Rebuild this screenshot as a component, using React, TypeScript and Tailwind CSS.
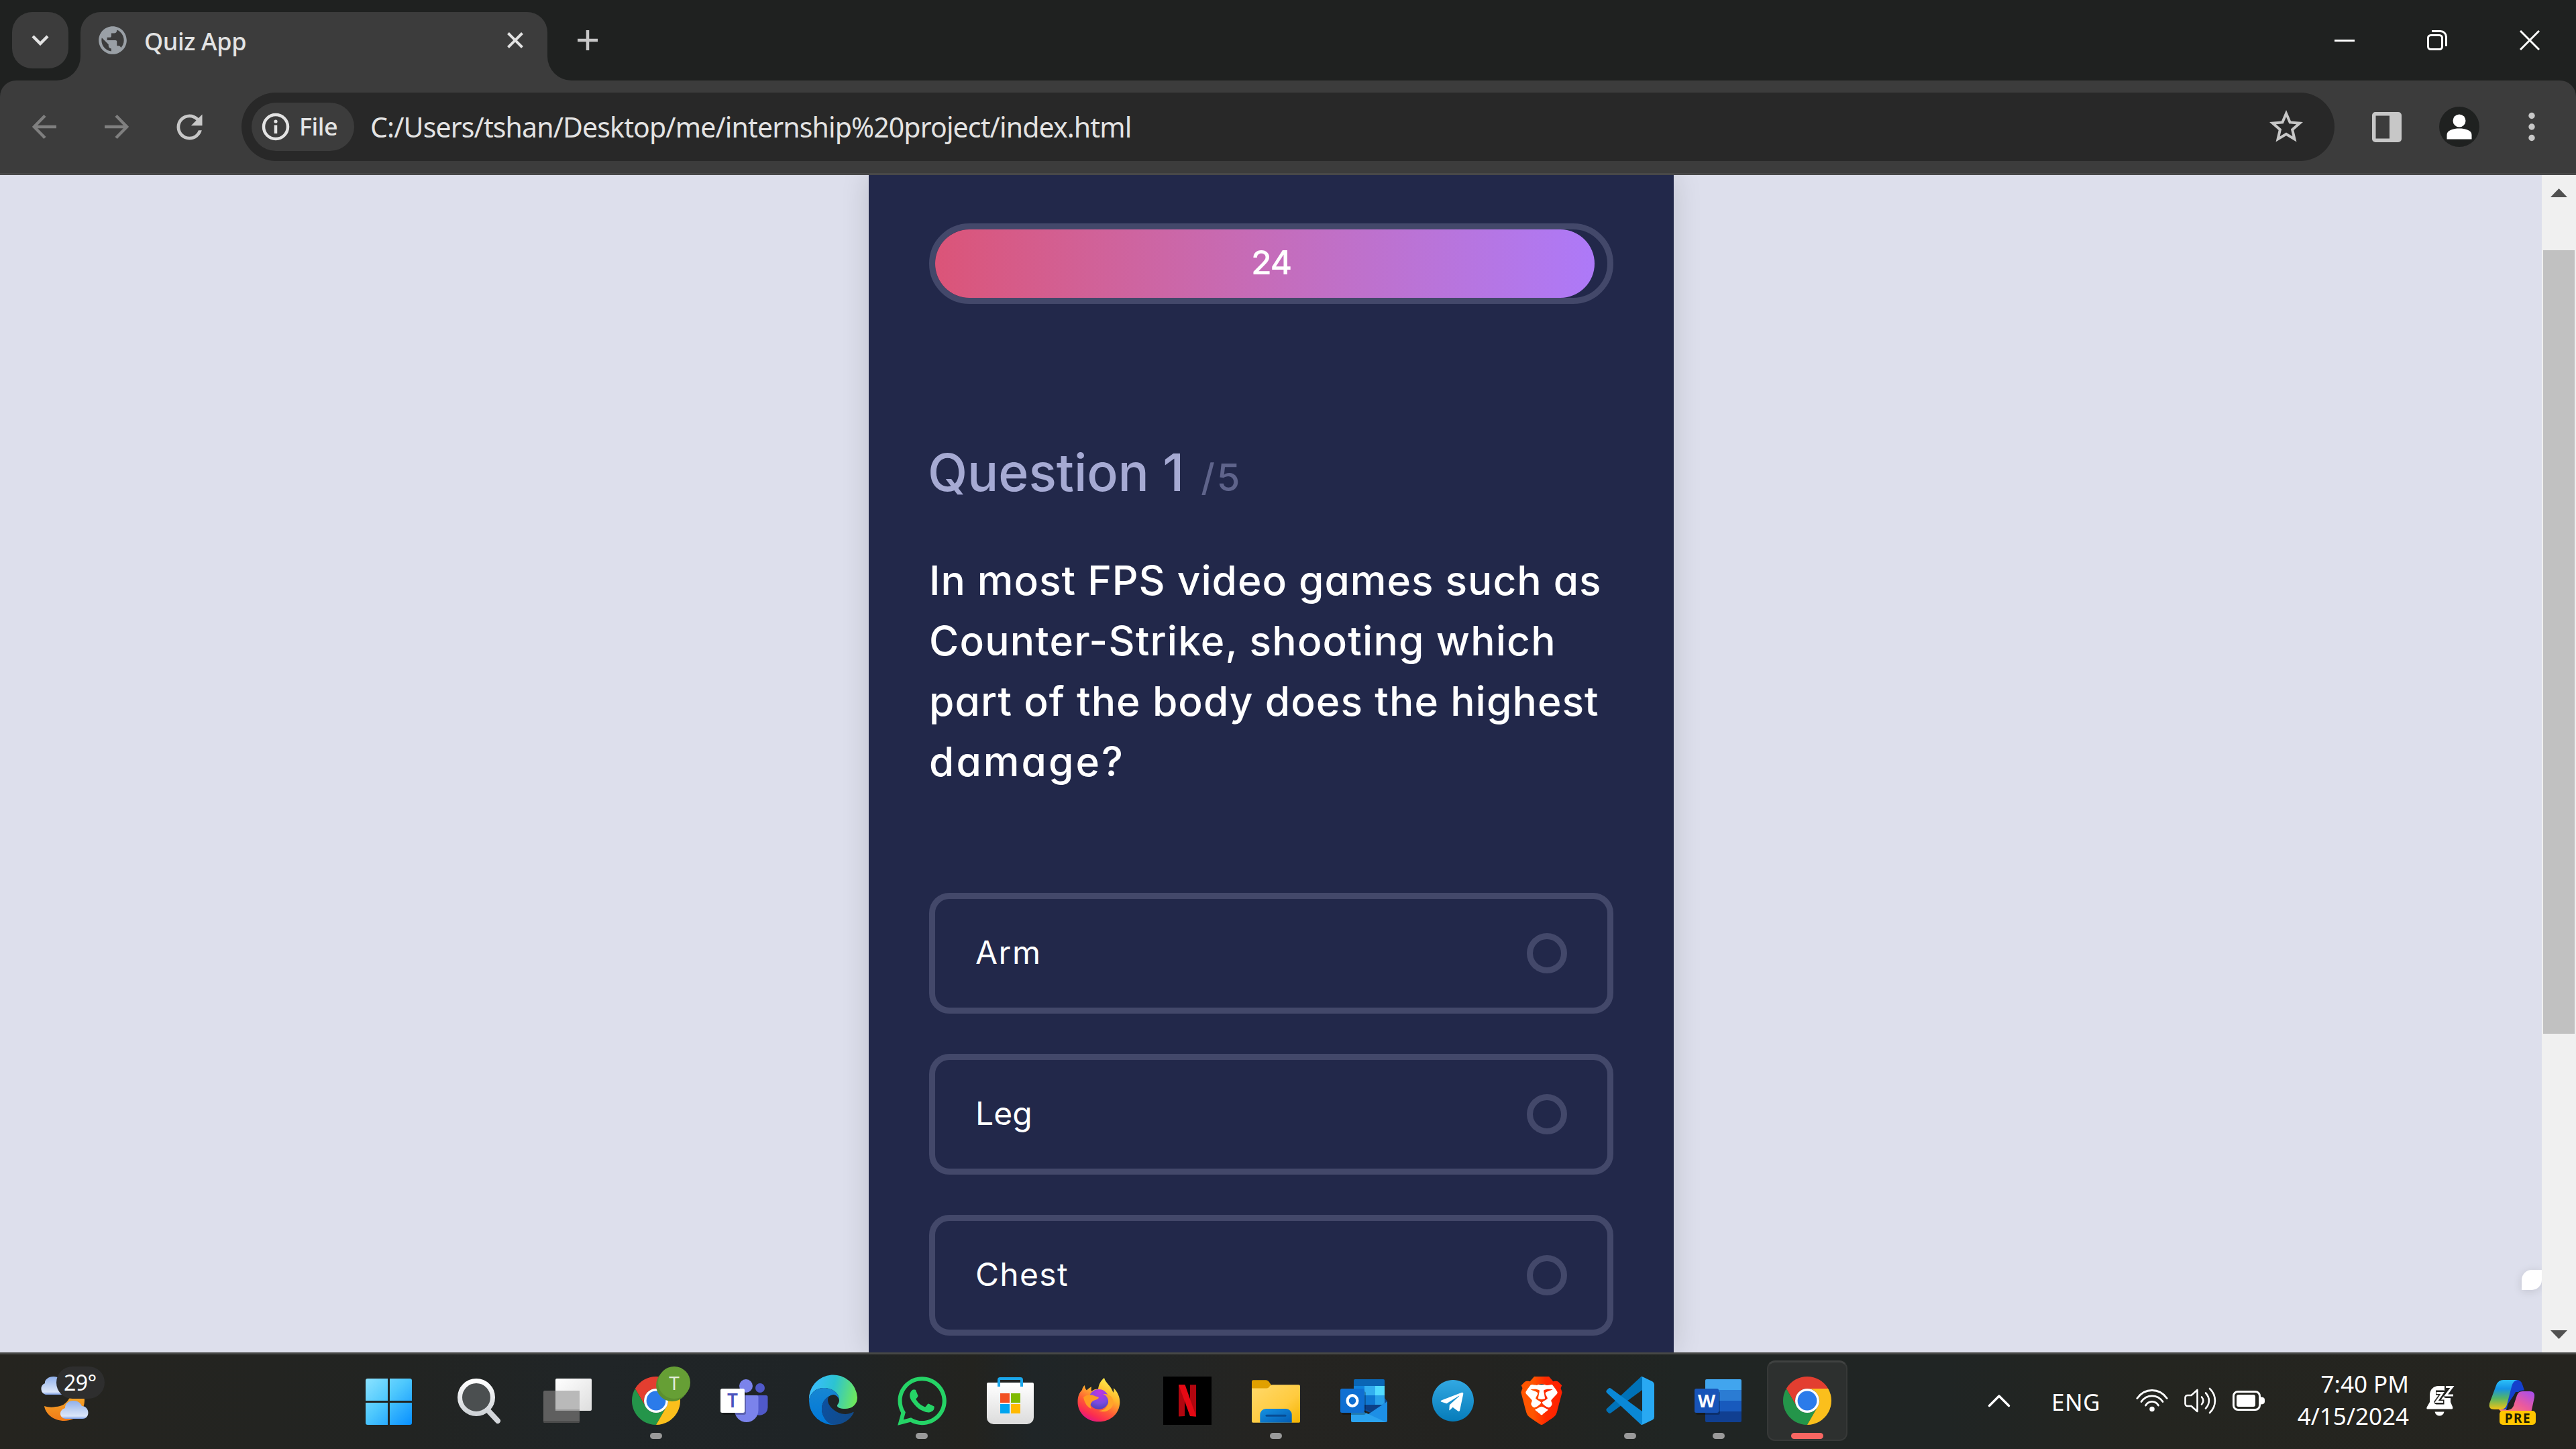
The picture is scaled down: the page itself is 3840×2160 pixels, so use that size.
import type { ReactNode } from "react";
import { FaTelegram, FaWhatsapp } from "react-icons/fa";
import { MdPublic, MdRefresh, MdStarBorder } from "react-icons/md";
import { SiBrave } from "react-icons/si";

/* ---------- Browser chrome ---------- */

function WindowControls() {
  return (
    <div className="ml-auto flex h-[120px]">
      <div className="flex w-[138px] items-center justify-center">
        <svg className="h-[30px] w-[30px]" viewBox="0 0 30 30">
          <path d="M0 15.500H30" stroke="#fff" strokeWidth="3" />
        </svg>
      </div>
      <div className="flex w-[138px] items-center justify-center">
        <svg className="h-[30px] w-[30px]" viewBox="0 0 30 30" fill="none" stroke="#fff" strokeWidth="3">
          <rect x="1.500" y="7.500" width="21" height="21" rx="4" />
          <path d="M7 1.500H20a8.500 8.500 0 0 1 8.500 8.500V24" />
        </svg>
      </div>
      <div className="flex w-[138px] items-center justify-center">
        <svg className="h-[30px] w-[30px]" viewBox="0 0 30 30">
          <path d="M1 1L29 29M29 1L1 29" stroke="#fff" strokeWidth="3" />
        </svg>
      </div>
    </div>
  );
}

function TabStrip() {
  return (
    <div className="flex h-[120px] w-full bg-[#1f2120]">
      <div className="mt-[18px] ml-[18px] flex h-[84px] w-[84px] shrink-0 items-center justify-center rounded-[30px] bg-[#3c3c3c]">
        <svg className="h-[18px] w-[28px]" viewBox="0 0 28 18">
          <path d="M3 3L14 14L25 3" fill="none" stroke="#e3e3e3" strokeWidth="4.500" />
        </svg>
      </div>
      <div className="relative mt-[18px] ml-[18px] flex h-[102px] w-[696px] shrink-0 items-start rounded-t-[30px] bg-[#3c3c3c]">
        <svg className="absolute bottom-0 -left-[36px] h-[36px] w-[36px]" viewBox="0 0 36 36">
          <path d="M36 0V36H0A36 36 0 0 0 36 0Z" fill="#3c3c3c" />
        </svg>
        <svg className="absolute -right-[36px] bottom-0 h-[36px] w-[36px]" viewBox="0 0 36 36">
          <path d="M0 0V36H36A36 36 0 0 1 0 0Z" fill="#3c3c3c" />
        </svg>
        <MdPublic className="mt-[17px] ml-[23px] h-[50px] w-[50px] text-[#9aa0a6]" />
        <span className="ml-[22px] h-[84px] text-[36px] leading-[88px] font-medium tracking-[-0.4px] whitespace-nowrap text-[#e3e3e3]">
          Quiz App
        </span>
        <svg className="mt-[30px] mr-[36px] ml-auto h-[24px] w-[24px]" viewBox="0 0 24 24">
          <path d="M1.500 1.500L22.500 22.500M22.500 1.500L1.500 22.500" stroke="#e3e3e3" strokeWidth="4" />
        </svg>
      </div>
      <div className="flex h-[120px] w-[120px] items-center justify-center">
        <svg className="h-[30px] w-[30px]" viewBox="0 0 30 30">
          <path d="M0 15H30M15 0V30" stroke="#c7c7c7" strokeWidth="4.500" />
        </svg>
      </div>
      <WindowControls />
    </div>
  );
}

function ToolCell({ children }: { children: ReactNode }) {
  return <div className="flex w-[108px] shrink-0 items-center justify-center">{children}</div>;
}

function Toolbar() {
  return (
    <div className="h-[141px] bg-[#1f2120]">
      <div className="flex h-[141px] items-stretch rounded-t-[24px] border-b-[3px] border-[#484848] bg-[#3c3c3c] pl-[12px]">
        <ToolCell>
          <svg className="h-[38px] w-[36px]" viewBox="0 0 36 38">
            <path d="M36 19H4M19 2.500L2.800 19L19 35.500" fill="none" stroke="#7f7f7f" strokeWidth="4.500" />
          </svg>
        </ToolCell>
        <ToolCell>
          <svg className="h-[38px] w-[36px]" viewBox="0 0 36 38">
            <path d="M0 19H32M17 2.500L33.200 19L17 35.500" fill="none" stroke="#7f7f7f" strokeWidth="4.500" />
          </svg>
        </ToolCell>
        <ToolCell>
          <MdRefresh className="h-[57px] w-[57px] text-[#c7c7c7]" />
        </ToolCell>
        <div className="mt-[18px] ml-[24px] flex h-[102px] w-[3120px] shrink-0 items-center rounded-full bg-[#282828] pl-[15px]">
          <div className="flex h-[72px] w-[153px] shrink-0 items-center rounded-full bg-[#3c3c3c] pl-[15px]">
            <svg className="h-[42px] w-[42px]" viewBox="0 0 42 42">
              <circle cx="21" cy="21" r="18" fill="none" stroke="#e3e3e3" strokeWidth="4.500" />
              <path d="M21 18.500V31" stroke="#e3e3e3" strokeWidth="4.500" />
              <circle cx="21" cy="13" r="2.600" fill="#e3e3e3" />
            </svg>
            <span className="ml-[14px] text-[36px] leading-[68px] font-medium tracking-[-0.5px] text-[#e3e3e3]">File</span>
          </div>
          <span className="ml-[24px] text-[41px] leading-[98px] tracking-[-0.87px] whitespace-nowrap text-[#e3e3e3]">
            C:/Users/tshan/Desktop/me/internship%20project/index.html
          </span>
          <MdStarBorder className="mr-[42px] ml-auto h-[60px] w-[60px] text-[#c7c7c7]" />
        </div>
        <div className="ml-[24px] flex">
          <ToolCell>
            <svg className="h-[45px] w-[44px]" viewBox="0 0 44 45">
              <path fillRule="evenodd" fill="#c7c7c7" d="M5 0H39a5 5 0 0 1 5 5V40a5 5 0 0 1-5 5H5a5 5 0 0 1-5-5V5a5 5 0 0 1 5-5ZM5.500 5.500V39.500H26V5.500Z" />
            </svg>
          </ToolCell>
          <ToolCell>
            <svg className="h-[60px] w-[60px]" viewBox="0 0 60 60">
              <circle cx="30" cy="30" r="30" fill="#1f2120" />
              <circle cx="30" cy="21" r="9.500" fill="#fff" />
              <path d="M11.500 48.500V42C11.500 35 21 32.500 30 32.500S48.500 35 48.500 42V48.500Z" fill="#fff" />
            </svg>
          </ToolCell>
          <ToolCell>
            <svg className="h-[44px] w-[10px]" viewBox="0 0 10 44" fill="#c7c7c7">
              <circle cx="5" cy="5.500" r="4.700" />
              <circle cx="5" cy="22" r="4.700" />
              <circle cx="5" cy="38.500" r="4.700" />
            </svg>
          </ToolCell>
        </div>
      </div>
    </div>
  );
}

/* ---------- Quiz page ---------- */

const questionLines: [string, string][] = [
  ["In most FPS video games such as", "tracking-[0.95px]"],
  ["Counter-Strike, shooting which", "tracking-[1.15px]"],
  ["part of the body does the highest", "tracking-[1.05px]"],
  ["damage?", "tracking-[3px]"],
];

const options: [string, string][] = [
  ["Arm", "tracking-[1.5px]"],
  ["Leg", "tracking-[0px]"],
  ["Chest", "tracking-[1.3px]"],
];

function QuizCard() {
  return (
    <div className="ml-[1295px] h-[1755px] w-[1200px] shrink-0 bg-[#22284a] px-[90px] pt-[72px] font-[Inter] shadow-[0_0_40px_0_rgba(0,0,0,0.14)] [font-feature-settings:'cv11']">
      <div className="relative h-[120px] w-[1020px] rounded-full border-[9px] border-[#43486a]">
        <div className="h-[102px] w-[983px] rounded-full bg-linear-to-r from-[#db5478] to-[#ad79f8]" />
        <div className="absolute inset-0 flex items-center justify-center pb-[4px]">
          <span className="text-[50px] leading-none font-[550] tracking-[-1.500px] text-white">24</span>
        </div>
      </div>
      <h1 className="mt-[206px] h-[90px] text-[77px] leading-[90px] font-[520] whitespace-nowrap text-[#a6aad3]">
        <span className="-ml-[2px] tracking-[-0.1px]">Question 1</span>
        <span className="ml-[25px] text-[56px] font-medium tracking-[3px] text-[#5f648b]">/5</span>
      </h1>
      <div className="mt-[71px] text-[60.5px] leading-[90px] font-[530] whitespace-nowrap text-white">
        {questionLines.map(([line, tracking]) => (
          <div key={line} className={tracking}>
            {line}
          </div>
        ))}
      </div>
      <div className="mt-[151px] flex flex-col gap-[60px]">
        {options.map(([label, tracking]) => (
          <div
            key={label}
            className="flex h-[180px] w-[1020px] items-center justify-between rounded-[30px] border-[9px] border-[#43486a] px-[60px] text-[48px] text-white"
          >
            <span className={`pb-[2px] ${tracking}`}>{label}</span>
            <span className="h-[60px] w-[60px] rounded-full border-[9px] border-[#43486a]" />
          </div>
        ))}
      </div>
    </div>
  );
}

function Page() {
  return (
    <div className="flex h-[1755px] w-full overflow-hidden bg-[#dddfec]">
      <QuizCard />
      <div className="relative ml-auto h-full w-[51px] shrink-0 bg-[#f0f0f0]">
        <div className="absolute top-[1632px] right-[51px] h-[30px] w-[30px] rounded-tl-[15px] rounded-br-[15px] bg-white shadow-[0_2px_14px_0_rgba(0,0,0,0.12)]" />
        <div className="relative flex h-full flex-col items-center bg-[#f0f0f0]">
          <svg className="mt-[20px] h-[13px] w-[25px]" viewBox="0 0 25 13">
            <path d="M0 13L12.500 0L25 13Z" fill="#505050" />
          </svg>
          <div className="mt-[79px] h-[1168px] w-[47px] bg-[#c1c1c1]" />
          <svg className="mt-auto mb-[20px] h-[13px] w-[25px]" viewBox="0 0 25 13">
            <path d="M0 0L12.500 13L25 0Z" fill="#505050" />
          </svg>
        </div>
      </div>
    </div>
  );
}

/* ---------- Taskbar icons ---------- */

function Glyph({ children }: { children: ReactNode }) {
  return (
    <svg className="h-[72px] w-[72px] overflow-visible" viewBox="0 0 72 72">
      {children}
    </svg>
  );
}

function StartIcon() {
  return (
    <Glyph>
      <linearGradient id="start" gradientUnits="userSpaceOnUse" x1="0" y1="3" x2="68" y2="72">
        <stop offset="0" stopColor="#8ae2ff" />
        <stop offset=".45" stopColor="#4ec8fd" />
        <stop offset="1" stopColor="#0890ff" />
      </linearGradient>
      <g fill="url(#start)">
        <path d="M2 3H32V36H-1V6A3 3 0 0 1 2 3Z" />
        <path d="M35 3H65A3 3 0 0 1 68 6V36H35Z" />
        <path d="M-1 39H32V72H2A3 3 0 0 1-1 69Z" />
        <path d="M35 39H68V69A3 3 0 0 1 65 72H35Z" />
      </g>
    </Glyph>
  );
}

function SearchIcon() {
  return (
    <Glyph>
      <linearGradient id="lens" x1="0" y1="0" x2="0" y2="1">
        <stop offset="0" stopColor="#ffffff" />
        <stop offset="1" stopColor="#cfd3d7" />
      </linearGradient>
      <path d="M50 51L64 66" stroke="#d3d6da" strokeWidth="8" strokeLinecap="round" />
      <circle cx="32" cy="31" r="24.500" fill="#4b4f50" stroke="url(#lens)" strokeWidth="7" />
    </Glyph>
  );
}

function TaskViewIcon() {
  return (
    <Glyph>
      <linearGradient id="pane" x1="0" y1="0" x2="1" y2="1">
        <stop offset="0" stopColor="#ffffff" />
        <stop offset="1" stopColor="#dedede" />
      </linearGradient>
      <rect x="18" y="3" width="54" height="48" rx="2" fill="url(#pane)" />
      <rect x="0" y="21" width="54" height="48" rx="2" fill="#5f5f5f" />
      <rect x="18" y="21" width="36" height="28" fill="#b9b9b9" />
      <rect x="18" y="49" width="36" height="2" fill="#9c9c9c" />
      <path d="M0 66H54V67A2 2 0 0 1 52 69H2A2 2 0 0 1 0 67Z" fill="#4c4c4c" />
    </Glyph>
  );
}

function ChromeIcon() {
  return (
    <Glyph>
      <path d="M4.800 18A36 36 0 0 1 67.200 18H36A18 18 0 0 0 20.400 45Z" fill="#e33e30" />
      <path d="M4.800 18A36 36 0 0 0 36 72L51.600 45A18 18 0 0 1 20.400 45Z" fill="#24954a" />
      <path d="M67.200 18A36 36 0 0 1 36 72L51.600 45A18 18 0 0 0 36 18Z" fill="#fbbf1c" />
      <circle cx="36" cy="36" r="18" fill="#fff" />
      <circle cx="36" cy="36" r="14.400" fill="#2b7bea" />
    </Glyph>
  );
}

function ChromeProfileIcon() {
  return (
    <div className="relative h-[72px] w-[72px]">
      <ChromeIcon />
      <div className="absolute -top-[11px] left-[36px] h-[48px] w-[48px] rounded-full bg-[#5b8f30]" />
      <div className="absolute -top-[15px] left-[39px] flex h-[48px] w-[48px] items-center justify-center rounded-full bg-[#669f35] text-[28px] leading-none text-[#e4edda]">
        T
      </div>
    </div>
  );
}

function TeamsIcon() {
  return (
    <Glyph>
      <circle cx="59" cy="17" r="7" fill="#5059c9" />
      <circle cx="38" cy="14" r="10" fill="#7b83eb" />
      <path d="M50 28H68A2.500 2.500 0 0 1 70.500 30.500V46A12 12 0 0 1 50 54Z" fill="#5059c9" />
      <path d="M21 28H54A2.500 2.500 0 0 1 56.500 30.500V50A17.700 18 0 0 1 21 50Z" fill="#7b83eb" />
      <rect x="3" y="22" width="35" height="35" rx="3" fill="#000" opacity=".25" />
      <rect x="0" y="18" width="36" height="36" rx="2.500" fill="#fff" />
      <text x="18" y="46" textAnchor="middle" fontFamily="Noto Sans" fontSize="28" fontWeight="600" fill="#4b53bc">T</text>
    </Glyph>
  );
}

function EdgeIcon() {
  return (
    <Glyph>
      <linearGradient id="edgeTop" gradientUnits="userSpaceOnUse" x1="4" y1="20" x2="70" y2="36">
        <stop offset="0" stopColor="#39bdfb" />
        <stop offset=".45" stopColor="#2cc3d2" />
        <stop offset="1" stopColor="#6fe95a" />
      </linearGradient>
      <linearGradient id="edgeLeft" gradientUnits="userSpaceOnUse" x1="20" y1="17" x2="20" y2="70">
        <stop offset="0" stopColor="#1786d2" />
        <stop offset="1" stopColor="#0078d9" />
      </linearGradient>
      <linearGradient id="edgeDark" gradientUnits="userSpaceOnUse" x1="20" y1="40" x2="66" y2="60">
        <stop offset="0" stopColor="#0c50a0" />
        <stop offset="1" stopColor="#124a88" />
      </linearGradient>
      <path d="M0 36A36 36 0 0 1 72 31C72 42 64 48 54 48C46 48 42 46 42 43.500C42 41.500 45 40 45 35C45 24 34 17 22 17C10 17 1 25 0 36Z" fill="url(#edgeTop)" />
      <path d="M0 36C1 25 10 17 22 17C34 17 45 24 45 35C43 29 39 27 36 27C26 29 19 38 19 48C19 60 28 70 40 71.800A36 36 0 0 1 0 36Z" fill="url(#edgeLeft)" />
      <path d="M32 28.500C24 32 19 39 19 48C19 60 27 71 37 72C51 72 62 64 66.500 54C67 52.500 66 52.500 64.500 53.500C58 57 49 56.500 42 53C34 48.500 28 42 28 35C28 31 30 29 32 28.500Z" fill="url(#edgeDark)" />
    </Glyph>
  );
}

function StoreIcon() {
  return (
    <Glyph>
      <linearGradient id="bag" x1="0" y1="0" x2="0" y2="1">
        <stop offset="0" stopColor="#ffffff" />
        <stop offset="1" stopColor="#dcdcdc" />
      </linearGradient>
      <path d="M3 9H69A2 2 0 0 1 71 11V61A10 10 0 0 1 61 71H11A10 10 0 0 1 1 61V11A2 2 0 0 1 3 9Z" fill="url(#bag)" />
      <path d="M19 15V5A2 2 0 0 1 21 3H51A2 2 0 0 1 53 5V15" fill="none" stroke="#1aa7ec" strokeWidth="4" />
      <rect x="21" y="25" width="14" height="14" fill="#f25022" />
      <rect x="37" y="25" width="14" height="14" fill="#7fba00" />
      <rect x="21" y="41" width="14" height="14" fill="#00a4ef" />
      <rect x="37" y="41" width="14" height="14" fill="#ffb900" />
    </Glyph>
  );
}

function FirefoxIcon() {
  return (
    <Glyph>
      <linearGradient id="flame" gradientUnits="userSpaceOnUse" x1="54" y1="6" x2="22" y2="66">
        <stop offset="0" stopColor="#fff04d" />
        <stop offset=".35" stopColor="#ffb52b" />
        <stop offset=".65" stopColor="#ff5a36" />
        <stop offset=".85" stopColor="#fb2d50" />
        <stop offset="1" stopColor="#e01586" />
      </linearGradient>
      <radialGradient id="orb" cx=".55" cy=".15" r=".9">
        <stop offset="0" stopColor="#c233e0" />
        <stop offset=".6" stopColor="#7a4be0" />
        <stop offset="1" stopColor="#4a3fb0" />
      </radialGradient>
      <path d="M4.500 38C4.500 29 7 24 11 20C11.500 17 13 14.500 15 13C15 16 16 18.500 18 20.500C20 18 22.500 16.500 25 15C24.500 18 24.500 20 25 22C28 19.500 31 18.500 35 18.500C36 11 39 6 44 2C46 10 54 13 57.500 24C58.500 21.500 58.500 19 58 17C64 23 67.500 30 67.300 39C66.500 56 53 67.300 36 67.300C18 67.300 4.500 54 4.500 38Z" fill="url(#flame)" />
      <circle cx="36" cy="34" r="15" fill="url(#orb)" />
      <path d="M13 31C16 27 24 26 29 28.500C32 30 35 30 36 31.500C34 35 29 34.500 26 37.500C23 40.500 23 44 25 48C19 46 15 40 13 31Z" fill="#ff9b22" />
      <path d="M42 26C49 28 52 36 49 43C47 48 42 51 36 51C45 55 56 50 58 39C58 31 52 25 42 26Z" fill="#ffa52a" />
    </Glyph>
  );
}

function NetflixIcon() {
  return (
    <Glyph>
      <rect width="72" height="72" fill="#000" />
      <path d="M23 12.300H32V59L23 59.500ZM40 12.300H49V59.500L40 59Z" fill="#b1060f" />
      <path d="M23 12.300H32.500L49.200 59.500L40 59Z" fill="#e50914" />
    </Glyph>
  );
}

function ExplorerIcon() {
  return (
    <Glyph>
      <linearGradient id="folder" x1="0" y1="0" x2="1" y2="1">
        <stop offset="0" stopColor="#ffd96b" />
        <stop offset=".6" stopColor="#ffcb3f" />
        <stop offset="1" stopColor="#f5b400" />
      </linearGradient>
      <linearGradient id="dock" x1="0" y1="0" x2="1" y2="1">
        <stop offset="0" stopColor="#1592e2" />
        <stop offset="1" stopColor="#045cb3" />
      </linearGradient>
      <path d="M0 8A2.500 2.500 0 0 1 2.500 5.300H21C25 5.300 26 9 29 12.300V22H0Z" fill="#e0a000" />
      <path d="M0 17.500H22C27 17.500 26 12.300 31 12.300H70A2 2 0 0 1 72 14.300V66.500A2 2 0 0 1 70 68.700H2A2 2 0 0 1 0 66.500Z" fill="url(#folder)" />
      <path d="M12.300 68.700V57A9 9 0 0 1 21 48H51A9 9 0 0 1 59.700 57V68.700Z" fill="url(#dock)" />
      <path d="M22 58.300H50" stroke="#074d94" strokeWidth="3" strokeLinecap="round" />
    </Glyph>
  );
}

function OutlookIcon() {
  return (
    <Glyph>
      <path d="M22 4H64A2 2 0 0 1 66 6V14H20V6A2 2 0 0 1 22 4Z" fill="#0a66b5" />
      <rect x="20" y="14" width="16" height="30" fill="#0f83dd" />
      <rect x="36" y="14" width="16" height="14" fill="#32aff0" />
      <rect x="52" y="14" width="14" height="14" fill="#52dcff" />
      <rect x="36" y="28" width="16" height="14" fill="#0f78d2" />
      <rect x="52" y="28" width="14" height="14" fill="#28a0e8" />
      <path d="M36 42H66V32L70 37L45 54L30 48Z" fill="#0a4b96" />
      <path d="M36 42H66L46 53L34 46Z" fill="#0c3f86" />
      <path d="M70 37V66A2 2 0 0 1 68 68H24Z" fill="#1d8fe6" />
      <path d="M16 44L68 68H18A2 2 0 0 1 16 66Z" fill="#2ba3ef" />
      <rect x="2" y="22" width="36" height="35" rx="3" fill="#000" opacity=".25" />
      <rect x="0" y="18" width="36" height="36" rx="2.500" fill="#0f6fd2" />
      <ellipse cx="18" cy="36" rx="7.400" ry="7.800" fill="none" stroke="#fff" strokeWidth="4.300" />
    </Glyph>
  );
}

function TelegramIcon() {
  return (
    <div className="relative flex h-[72px] w-[72px] items-center justify-center">
      <svg className="absolute h-0 w-0">
        <linearGradient id="tg" x1="0" y1="0" x2="0" y2="1">
          <stop offset="0" stopColor="#32a8e2" />
          <stop offset="1" stopColor="#067cba" />
        </linearGradient>
      </svg>
      <div className="absolute h-[50px] w-[50px] rounded-full bg-white" />
      <FaTelegram className="relative h-[64px] w-[64px]" fill="url(#tg)" stroke="none" />
    </div>
  );
}

function BraveIcon() {
  return (
    <div className="relative h-[72px] w-[72px]">
      <svg className="absolute h-[72px] w-[72px]" viewBox="0 0 72 72">
        <linearGradient id="brave" x1="0" y1="0" x2="1" y2="0">
          <stop offset=".3" stopColor="#ff5500" />
          <stop offset=".6" stopColor="#ff2a00" />
          <stop offset="1" stopColor="#ff2000" />
        </linearGradient>
        <path d="M14 12H58L62 26L54 50L36 62L18 50L10 26Z" fill="#fff" />
      </svg>
      <SiBrave className="relative h-[72px] w-[72px]" fill="url(#brave)" stroke="none" />
    </div>
  );
}

function VSCodeIcon() {
  return (
    <Glyph>
      <path d="M52 .500H54V20L7 54.500Q5 55.500 3.500 54L1 51.500Q-.500 49.500 1 48Z" fill="#0072b8" />
      <path d="M52 71.500H54V52L7 17.500Q5 16.500 3.500 18L1 20.500Q-.500 22.500 1 24Z" fill="#0a88d6" />
      <path d="M52 0.300Q53 -.300 55 .500L69.500 7.500Q72 9 72 12V60Q72 63 69.500 64.500L55 71.500Q53 72.300 52 71.700Q54 71.500 54 69V3Q54 .500 52 .300Z" fill="#28a9f3" />
    </Glyph>
  );
}

function WordIcon() {
  return (
    <Glyph>
      <path d="M18 4H68A2 2 0 0 1 70 6V20H16V6A2 2 0 0 1 18 4Z" fill="#41a5ee" />
      <rect x="16" y="20" width="54" height="16" fill="#2b7cd3" />
      <rect x="16" y="36" width="54" height="16" fill="#185abd" />
      <path d="M16 52H70V66A2 2 0 0 1 68 68H18A2 2 0 0 1 16 66Z" fill="#103f91" />
      <rect x="2" y="22" width="36" height="35" rx="3" fill="#000" opacity=".25" />
      <rect x="0" y="18" width="36" height="36" rx="2.500" fill="#1854b8" />
      <text x="18" y="45.700" textAnchor="middle" fontFamily="Noto Sans" fontSize="27" fontWeight="700" fill="#fff">W</text>
    </Glyph>
  );
}

function WeatherWidget() {
  return (
    <div className="relative mt-[18px] ml-[60px] h-[84px] w-[96px] shrink-0">
      <svg className="absolute inset-0 h-[84px] w-[96px]" viewBox="0 0 96 84">
        <linearGradient id="moon" x1="0" y1="0" x2="0" y2="1">
          <stop offset="0" stopColor="#f7b52e" />
          <stop offset="1" stopColor="#f07a17" />
        </linearGradient>
        <linearGradient id="cloud" x1="0" y1="0" x2="0" y2="1">
          <stop offset="0" stopColor="#8fb0ec" />
          <stop offset=".55" stopColor="#c3d4f3" />
          <stop offset=".85" stopColor="#dbe6f9" />
          <stop offset="1" stopColor="#7c9fe4" />
        </linearGradient>
        <path d="M8 42A9 9 0 0 1 7 25C6 20 12 15 20 15C34 15 36 32 36 42Z" fill="url(#cloud)" />
        <path d="M43 48C46 44 47 38 46 33C58 30 66 40 66 50C66 66 54 81 36 81C20 81 8 71 6 59C12 61 18 61 23 60C32 60 39 55 43 48Z" fill="url(#moon)" />
        <path d="M38 78C28 77 27 65 37 62C37 55 42 51 49 51C56 51 60 54 62 59C74 59 75 78 63 78Z" fill="url(#cloud)" />
      </svg>
      <div className="absolute top-0 left-[24px] flex h-[48px] w-[72px] items-center rounded-full bg-[#2e2e2e] pl-[11px]">
        <span className="text-[32px] leading-[48px] tracking-[-0.6px] text-white">29°</span>
      </div>
    </div>
  );
}

type AppEntry = { name: string; icon: ReactNode; state?: "open" | "active" };

const apps: AppEntry[] = [
  { name: "start", icon: <StartIcon /> },
  { name: "search", icon: <SearchIcon /> },
  { name: "taskview", icon: <TaskViewIcon /> },
  { name: "chrome-profile", icon: <ChromeProfileIcon />, state: "open" },
  { name: "teams", icon: <TeamsIcon /> },
  { name: "edge", icon: <EdgeIcon /> },
  { name: "whatsapp", icon: <FaWhatsapp className="h-[83px] w-[83px] shrink-0 text-[#25d366]" />, state: "open" },
  { name: "store", icon: <StoreIcon /> },
  { name: "firefox", icon: <FirefoxIcon /> },
  { name: "netflix", icon: <NetflixIcon /> },
  { name: "explorer", icon: <ExplorerIcon />, state: "open" },
  { name: "outlook", icon: <OutlookIcon /> },
  { name: "telegram", icon: <TelegramIcon /> },
  { name: "brave", icon: <BraveIcon /> },
  { name: "vscode", icon: <VSCodeIcon />, state: "open" },
  { name: "word", icon: <WordIcon />, state: "open" },
  { name: "chrome", icon: <ChromeIcon />, state: "active" },
];

function AppCell({ icon, state }: AppEntry) {
  return (
    <div className="relative flex h-[138px] w-[132px] shrink-0 items-center justify-center">
      {state === "active" && (
        <div className="absolute top-[9px] left-[6px] h-[120px] w-[120px] rounded-[12px] border-[2px] border-t-[3px] border-[#373938] border-t-[#404241] bg-[#2d302f]" />
      )}
      <div className="relative flex h-[72px] w-[72px] items-center justify-center">{icon}</div>
      {state === "open" && <div className="absolute top-[117px] h-[9px] w-[18px] rounded-full bg-[#9a9a9a]" />}
      {state === "active" && <div className="absolute top-[117px] h-[9px] w-[48px] rounded-full bg-[#f96662]" />}
    </div>
  );
}

function CopilotIcon() {
  return (
    <svg className="h-[72px] w-[72px] overflow-visible" viewBox="0 0 72 72">
      <linearGradient id="coL" x1="0" y1="0" x2="0" y2="1">
        <stop offset="0" stopColor="#2cc0f8" />
        <stop offset=".3" stopColor="#1593e8" />
        <stop offset=".62" stopColor="#55b565" />
        <stop offset="1" stopColor="#f2c314" />
      </linearGradient>
      <linearGradient id="coR" x1="1" y1="0" x2="0" y2="1">
        <stop offset="0" stopColor="#a24df5" />
        <stop offset=".5" stopColor="#ec5a9c" />
        <stop offset="1" stopColor="#ff8f5a" />
      </linearGradient>
      <path d="M33 5H41C47 5 49 8 50.500 13L53 20.500C45 20.500 41 24 39 32L34 49H20Z" fill="#1440cc" />
      <path d="M40 23H53L37 51L27 49Z" fill="#21201f" />
      <path d="M11 13Q14 5 22 5H43Q36 6 34 15L27 42Q25 49 18 49H8Q-1 49 1 40Z" fill="url(#coL)" />
      <path d="M42 28Q44 22 50 22H61Q69.500 22 68 31L63 54H20L15 49H24C30 49 35 48 37 43Z" fill="url(#coR)" />
      <path d="M29 40L40 24L37 43C35 48 32 50 26 50Z" fill="#21201f" />
      <rect x="16" y="51" width="54" height="21" rx="5" fill="#ffc600" />
      <text x="43.500" y="68.500" textAnchor="middle" fontFamily="Noto Sans" fontSize="19" fontWeight="700" letterSpacing="1.500" fill="#1f1c00">PRE</text>
    </svg>
  );
}

function Tray() {
  return (
    <div className="flex h-[138px] items-center text-white">
      <svg className="ml-[203px] h-[20px] w-[34px]" viewBox="0 0 34 20">
        <path d="M2.500 17.500L17 3L31.500 17.500" fill="none" stroke="#fff" strokeWidth="3.500" strokeLinecap="round" strokeLinejoin="round" />
      </svg>
      <span className="ml-[61px] w-[74px] pt-[3px] text-[35px] leading-[48px] tracking-[0.5px]">ENG</span>
      <svg className="ml-[52px] h-[36px] w-[48px]" viewBox="0 0 48 36" fill="none" stroke="#fff" strokeWidth="2.800" strokeLinecap="round">
        <path d="M1.800 14.500C13-1.500 35-1.500 46.200 14.500" />
        <path d="M8 19.500C16 8 32 8 40 19.500" />
        <path d="M14.500 25C19 17.500 29 17.500 33.500 25" />
        <circle cx="24" cy="30.500" r="3" fill="#fff" strokeWidth="1.500" />
      </svg>
      <svg className="ml-[24px] h-[40px] w-[48px]" viewBox="0 0 48 40" fill="none" stroke="#fff" strokeWidth="2.600" strokeLinecap="round" strokeLinejoin="round">
        <path d="M19.500 4V36L10.500 28H5A3.500 3.500 0 0 1 1.500 24.500V15.500A3.500 3.500 0 0 1 5 12H10.500Z" />
        <path d="M26 14.500C29 18 29 22 26 25.500" />
        <path d="M32 8.500C38.500 15.500 38.500 24.500 32 31.500" />
        <path d="M38 2C48.500 12 48.500 28 38 38" />
      </svg>
      <svg className="ml-[24px] h-[30px] w-[48px]" viewBox="0 0 48 30">
        <rect x="1.500" y="1.500" width="39" height="27" rx="6.500" fill="none" stroke="#fff" strokeWidth="3" />
        <rect x="6" y="6" width="28" height="18" rx="3" fill="#fff" />
        <path d="M42 9.500C46 9.500 48 11 48 13.500V16.500C48 19 46 20.500 42 20.500Z" fill="#fff" />
      </svg>
      <div className="ml-[16px] flex w-[199px] flex-col items-end pb-[3px] text-[35px] leading-[48px] whitespace-nowrap">
        <span>7:40 PM</span>
        <span>4/15/2024</span>
      </div>
      <svg className="ml-[26px] h-[46px] w-[42px]" viewBox="0 0 42 46">
        <path d="M1.500 35.500C0 35.500 0 33.500 1 32L5 25V15C5 6 11 1 18 1H27V17H36V25L39 32C39.500 33.500 39.500 35.500 38 35.500Z" fill="#fff" />
        <path d="M12.500 39.500H26.500C25.500 43.500 23 45.500 19.500 45.500S13.500 43.500 12.500 39.500Z" fill="#fff" />
        <path d="M14 11H25L15 25H26.500" fill="none" stroke="#22221f" strokeWidth="7" strokeLinejoin="round" />
        <path d="M29 2.500H38.500L29 15.500H40" fill="none" stroke="#22221f" strokeWidth="7" strokeLinejoin="round" />
        <path d="M15 11.500H24L15 24.500H25" fill="none" stroke="#fff" strokeWidth="3" />
        <path d="M29 2.500H38.500L29 15H40" fill="none" stroke="#fff" strokeWidth="3" />
      </svg>
      <div className="ml-[51px]">
        <CopilotIcon />
      </div>
    </div>
  );
}

function Taskbar() {
  return (
    <div className="flex h-[144px] w-full items-start overflow-hidden border-t-[3px] border-[#474846] bg-[linear-gradient(90deg,#25241f_0px,#222422_600px,#202527_900px,#1f2426_1200px,#23231f_1450px,#1f2527_1540px,#252421_1900px,#232320_2200px,#202523_2500px,#202524_2900px,#242520_3200px,#25241f_3840px)]">
      <WeatherWidget />
      <div className="ml-[360px] flex">
        {apps.map((app) => (
          <AppCell key={app.name} {...app} />
        ))}
      </div>
      <Tray />
    </div>
  );
}

export default function App() {
  return (
    <div className="h-[2160px] w-[3840px] overflow-hidden bg-[#1f2120] font-['Noto_Sans',sans-serif]">
      <TabStrip />
      <Toolbar />
      <Page />
      <Taskbar />
    </div>
  );
}
